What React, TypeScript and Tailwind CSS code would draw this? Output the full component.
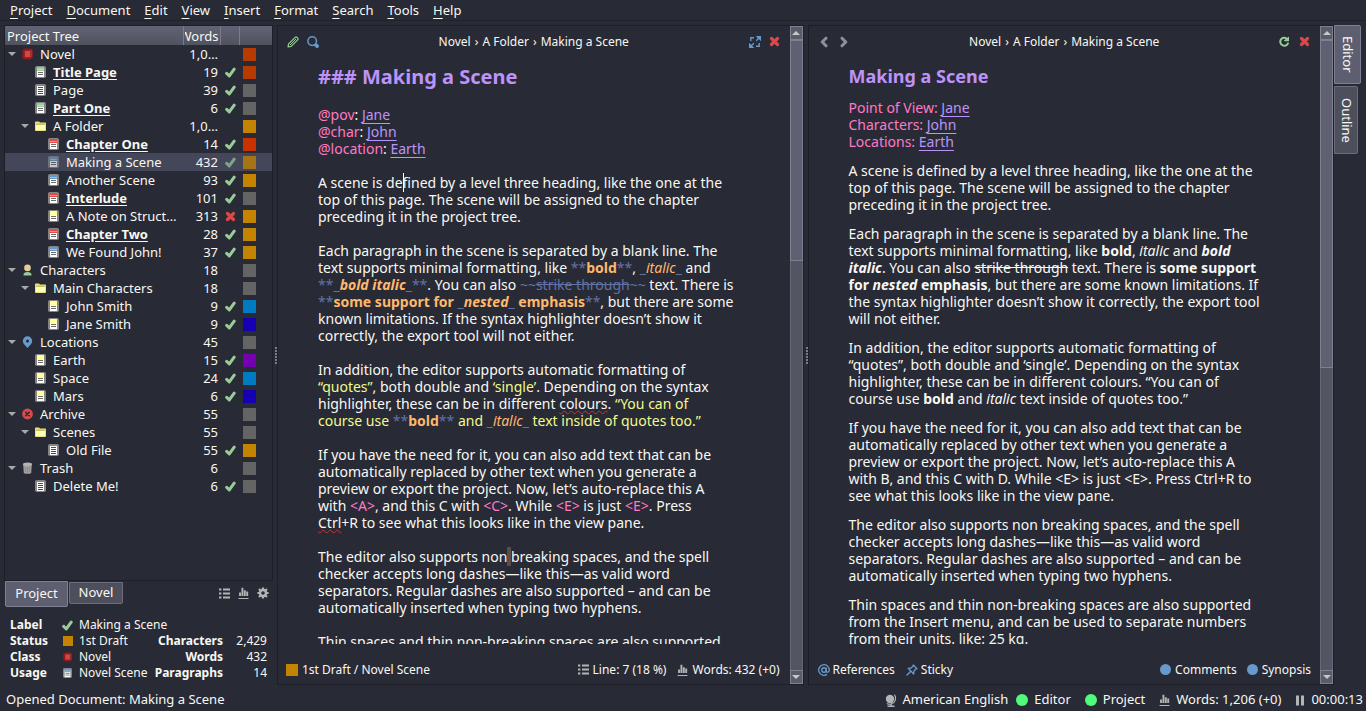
import React from "react";

const MENUS = ["Project", "Document", "Edit", "View", "Insert", "Format", "Search", "Tools", "Help"];

type IconName =
  | "novel" | "green" | "plain" | "red" | "blue" | "yellow"
  | "folder" | "person" | "pin" | "archive" | "trash";

type Row = {
  level: number;
  icon: IconName;
  name: string;
  words: string;
  mark?: "tick" | "cross";
  color: string;
  open?: boolean;
  bold?: boolean;
  selected?: boolean;
};

const GREY = "bg-[#646464]";
const AMBER = "bg-[#c48300]";

const ROWS: Row[] = [
  { level: 0, icon: "novel", name: "Novel", words: "1,0…", color: "bg-[#b53b00]", open: true },
  { level: 1, icon: "green", name: "Title Page", words: "19", mark: "tick", color: "bg-[#b53b00]", bold: true },
  { level: 1, icon: "plain", name: "Page", words: "39", mark: "tick", color: GREY },
  { level: 1, icon: "green", name: "Part One", words: "6", mark: "tick", color: GREY, bold: true },
  { level: 1, icon: "folder", name: "A Folder", words: "1,0…", color: AMBER, open: true },
  { level: 2, icon: "red", name: "Chapter One", words: "14", mark: "tick", color: "bg-[#c83200]", bold: true },
  { level: 2, icon: "blue", name: "Making a Scene", words: "432", mark: "tick", color: AMBER, selected: true },
  { level: 2, icon: "blue", name: "Another Scene", words: "93", mark: "tick", color: AMBER },
  { level: 2, icon: "red", name: "Interlude", words: "101", mark: "tick", color: GREY, bold: true },
  { level: 2, icon: "yellow", name: "A Note on Struct…", words: "313", mark: "cross", color: AMBER },
  { level: 2, icon: "red", name: "Chapter Two", words: "28", mark: "tick", color: AMBER, bold: true },
  { level: 2, icon: "blue", name: "We Found John!", words: "37", mark: "tick", color: AMBER },
  { level: 0, icon: "person", name: "Characters", words: "18", color: GREY, open: true },
  { level: 1, icon: "folder", name: "Main Characters", words: "18", color: GREY, open: true },
  { level: 2, icon: "yellow", name: "John Smith", words: "9", mark: "tick", color: "bg-[#007ac1]" },
  { level: 2, icon: "yellow", name: "Jane Smith", words: "9", mark: "tick", color: "bg-[#1500b4]" },
  { level: 0, icon: "pin", name: "Locations", words: "45", color: GREY, open: true },
  { level: 1, icon: "yellow", name: "Earth", words: "15", mark: "tick", color: "bg-[#7500b0]" },
  { level: 1, icon: "yellow", name: "Space", words: "24", mark: "tick", color: "bg-[#007ac1]" },
  { level: 1, icon: "yellow", name: "Mars", words: "6", mark: "tick", color: "bg-[#1500b4]" },
  { level: 0, icon: "archive", name: "Archive", words: "55", color: GREY, open: true },
  { level: 1, icon: "folder", name: "Scenes", words: "55", color: GREY, open: true },
  { level: 2, icon: "plain", name: "Old File", words: "55", mark: "tick", color: AMBER },
  { level: 0, icon: "trash", name: "Trash", words: "6", color: GREY, open: true },
  { level: 1, icon: "plain", name: "Delete Me!", words: "6", mark: "tick", color: GREY },
];

const INDENT = ["pl-0", "pl-[13px]", "pl-[26px]"];

function Tick({ className = "" }: { className?: string }) {
  return (
    <svg viewBox="0 0 11 11" className={`size-[11px] shrink-0 ${className}`} aria-hidden="true">
      <path d="M1.7 6.4 4.3 8.9 9.2 2.2" fill="none" stroke="#99cc99" strokeWidth="3" strokeLinecap="round" strokeLinejoin="round" />
    </svg>
  );
}

function Cross() {
  return (
    <svg viewBox="0 0 11 11" className="size-[11px] shrink-0" aria-hidden="true">
      <path d="M2.5 2.5 8.5 8.5M8.5 2.5 2.5 8.5" stroke="#dc4848" strokeWidth="3.2" strokeLinecap="round" />
    </svg>
  );
}

function DocIcon({ head, small }: { head?: string; small?: boolean }) {
  return (
    <svg viewBox="0 0 11 12" className={small ? "h-[10px] w-[9px] shrink-0" : "h-3 w-[11px] shrink-0"} aria-hidden="true">
      <rect width="11" height="12" rx="1.8" fill="#858585" />
      <rect x="2" y="2" width="7" height="9" fill="#fff" />
      {head ? (
        <>
          <rect x="2" y="1" width="7" height="4" fill={head} />
          <path d="M2 3.500h7" stroke="#fff" strokeWidth="1" opacity="0.4" />
          <path d="M3 6.500h5M3 8.500h5" stroke="#6b6b6b" strokeWidth="1" />
        </>
      ) : (
        <path d="M3 3.500h5M3 5.500h5M3 7.500h5M3 9.500h5" stroke="#4a4a4a" strokeWidth="1" />
      )}
    </svg>
  );
}

function NovelIcon({ small }: { small?: boolean }) {
  return (
    <svg viewBox="0 0 11 12" className={small ? "h-[10px] w-[9px] shrink-0" : "h-3 w-[11px] shrink-0"} aria-hidden="true">
      <path d="M2.2.6h7.2l1.3 1.2v7.8L8.8 11.5H1.6L.3 10.2V2.6z" fill="#8c1c1c" />
      <rect x="2.8" y="2.8" width="5.6" height="6.4" fill="#d24848" />
      <path d="M9.7 2v7.4" stroke="#c23a3a" strokeWidth="0.7" />
    </svg>
  );
}

function TreeIcon({ name }: { name: IconName }) {
  switch (name) {
    case "novel":
      return <NovelIcon />;
    case "green":
      return <DocIcon head="#99cc99" />;
    case "red":
      return <DocIcon head="#e24a4a" />;
    case "blue":
      return <DocIcon head="#6699cc" />;
    case "yellow":
      return <DocIcon head="#ffff99" />;
    case "plain":
      return <DocIcon />;
    case "folder":
      return (
        <svg viewBox="0 0 11 12" className="h-3 w-[11px] shrink-0" aria-hidden="true">
          <path d="M0 2.200Q0 1.400 .8 1.400H4l1 1.100h5.200q.8 0 .8.800v7q0 .8-.8.800H.8q-.8 0-.8-.8z" fill="#e8e07a" />
          <path d="M1 5h9v5H1z" fill="#ffffb4" />
          <path d="M1 4.200h9" stroke="#a9a352" strokeWidth="0.8" />
        </svg>
      );
    case "person":
      return (
        <svg viewBox="0 0 11 12" className="h-3 w-[11px] shrink-0" aria-hidden="true">
          <circle cx="5.5" cy="3.9" r="3.3" fill="#e6cd97" />
          <path d="M1.4 11.4c0-2.2 1.7-3.3 4.1-3.3s4.1 1.1 4.1 3.3z" fill="#99cc99" />
        </svg>
      );
    case "pin":
      return (
        <svg viewBox="0 0 11 12" className="h-3 w-[11px] shrink-0" aria-hidden="true">
          <path d="M5.5 12 2.1 8.3a4.7 4.7 0 1 1 6.8 0z" fill="#6699cc" />
          <circle cx="5.5" cy="5" r="1.5" fill="#282a36" />
        </svg>
      );
    case "archive":
      return (
        <svg viewBox="0 0 11 12" className="h-3 w-[11px] shrink-0" aria-hidden="true">
          <circle cx="5.5" cy="6" r="5.4" fill="#dc4848" />
          <path d="M3.8 4.3 7.2 7.7M7.2 4.3 3.8 7.7" stroke="#282a36" strokeWidth="1.5" strokeLinecap="round" />
        </svg>
      );
    case "trash":
      return (
        <svg viewBox="0 0 11 12" className="h-3 w-[11px] shrink-0" aria-hidden="true">
          <path d="M1.2 2.4h8.6L9.2 11q0 .8-3.7.8T1.8 11z" fill="#a0a0a0" />
          <ellipse cx="5.5" cy="2.3" rx="4.6" ry="1.7" fill="#b4b4b4" />
          <path d="M3.6 5v5M5.5 5.3v5M7.4 5v5" stroke="#858585" strokeWidth="0.7" />
        </svg>
      );
  }
}

function ListIcon() {
  return (
    <svg viewBox="0 0 11 11" className="size-[11px] shrink-0" aria-hidden="true">
      <path d="M0 1.5h2.4M0 5.5h2.4M0 9.5h2.4M4 1.5h7M4 5.5h7M4 9.5h7" stroke="#b4b4b4" strokeWidth="2" />
    </svg>
  );
}

function ChartIcon() {
  return (
    <svg viewBox="0 0 11 12" className="h-3 w-[11px] shrink-0" aria-hidden="true">
      <path d="M2 9V5.5M4.4 9V.8M6.8 9V3.2M9.2 9V4.5" stroke="#b4b4b4" strokeWidth="1.9" />
      <path d="M.5 11.5h10" stroke="#b4b4b4" strokeWidth="1" />
    </svg>
  );
}

function GearIcon() {
  return (
    <svg viewBox="0 0 12 12" className="size-3 shrink-0" aria-hidden="true">
      <circle cx="6" cy="6" r="3" fill="none" stroke="#b4b4b4" strokeWidth="2.4" />
      <path d="M6 .4v2M6 9.6v2M.4 6h2M9.6 6h2M2 2l1.5 1.5M8.5 8.5 10 10M10 2 8.5 3.5M3.5 8.5 2 10" stroke="#b4b4b4" strokeWidth="2.2" />
    </svg>
  );
}

function PencilIcon() {
  return (
    <svg viewBox="0 0 12 12" className="size-3 shrink-0" aria-hidden="true">
      <path d="M1 11 1.6 7.9 8.2 1.3q.8-.8 1.7 0l.8.8q.8.9 0 1.7L4.1 10.4z" fill="none" stroke="#99cc99" strokeWidth="1.2" strokeLinejoin="round" />
      <path d="M3 9 9 3" stroke="#99cc99" strokeWidth="1" />
    </svg>
  );
}

function SearchIcon() {
  return (
    <svg viewBox="0 0 12 12" className="size-3 shrink-0" aria-hidden="true">
      <circle cx="5.2" cy="5.1" r="4.3" fill="none" stroke="#6699cc" strokeWidth="1.5" />
      <path d="M9 9.2 10.1 10.2" stroke="#6699cc" strokeWidth="3.6" strokeLinecap="round" />
    </svg>
  );
}

function ExpandIcon() {
  return (
    <svg viewBox="0 0 12 12" className="size-3 shrink-0" aria-hidden="true">
      <path d="M6.7 0H12v5.2z" fill="#6699cc" />
      <path d="M0 6.8V12h5.3z" fill="#6699cc" />
      <path d="M10 2 7.2 4.8M2 10l2.8-2.8M5 1.8H1.8V5M10.2 7v3.2H7" fill="none" stroke="#6699cc" strokeWidth="1.4" />
    </svg>
  );
}

function RefreshIcon() {
  return (
    <svg viewBox="0 0 11 11" className="size-[11px] shrink-0" aria-hidden="true">
      <path d="M8.2 3A4 4 0 1 0 9.2 6.6" fill="none" stroke="#99cc99" strokeWidth="2" />
      <path d="M5.2 5.3V4.3L10 .4V5.3z" fill="#99cc99" />
    </svg>
  );
}

function Chevron({ right }: { right?: boolean }) {
  return (
    <svg viewBox="0 0 8 12" className="h-3 w-2 shrink-0" aria-hidden="true">
      <path d={right ? "M2 2.2 5.8 6 2 9.8" : "M6 2.2 2.2 6 6 9.8"} fill="none" stroke="#8f9199" strokeWidth="3" strokeLinecap="round" strokeLinejoin="round" />
    </svg>
  );
}

function AtIcon() {
  return (
    <svg viewBox="0 0 12 12" className="size-3 shrink-0" aria-hidden="true">
      <circle cx="6" cy="6" r="2.2" fill="none" stroke="#6699cc" strokeWidth="1.4" />
      <path d="M8.2 3.8v3.1c0 2 3.1 1.8 3.1-.9A5.3 5.3 0 1 0 9 10.4" fill="none" stroke="#6699cc" strokeWidth="1.3" />
    </svg>
  );
}

function StickyIcon() {
  return (
    <svg viewBox="0 0 12 12" className="size-3 shrink-0" aria-hidden="true">
      <path d="M7.3 1 11 4.7 9.7 5.2 8 7l-.3 3L2.2 4.4 5.2 4 6.9 2.3z" fill="none" stroke="#6699cc" strokeWidth="1.3" strokeLinejoin="round" />
      <path d="M4.8 7.2 1 11" stroke="#6699cc" strokeWidth="1.4" strokeLinecap="round" />
    </svg>
  );
}

function GlobeIcon() {
  return (
    <svg viewBox="0 0 12 13" className="h-[13px] w-3 shrink-0" aria-hidden="true">
      <circle cx="5" cy="5" r="4.2" fill="#b4b4b4" />
      <path d="M9.4 .6C12 4 10.400 8.800 6.400 9.900 4.800 10.400 3.200 10.200 1.800 9.400" fill="none" stroke="#b4b4b4" strokeWidth="1.1" />
      <path d="M6 9.8v2.200M2.500 12.200h7" stroke="#b4b4b4" strokeWidth="1.4" />
    </svg>
  );
}

function Dot({ className }: { className: string }) {
  return <span className={`shrink-0 rounded-full ${className}`} />;
}

function ProjectTree() {
  const th = "h-[19px] border-r border-[#7a7c8b] p-0 font-normal";
  return (
    <div className="min-h-0 flex-1 overflow-hidden border border-[#1d1e27]">
      <table className="w-full table-fixed border-collapse text-[13px] leading-[18px]">
        <colgroup>
          <col />
          <col className="w-[37px]" />
          <col className="w-[19px]" />
          <col className="w-[33px]" />
        </colgroup>
        <thead className="bg-linear-to-b from-[#626475] to-[#505260]">
          <tr>
            <th className={`${th} pl-[2px] text-left`}>Project Tree</th>
            <th className={`${th} px-px`}>
              <span className="flex justify-end overflow-hidden">Words</span>
            </th>
            <th className={th} aria-label="Active" />
            <th className="p-0" aria-label="Status" />
          </tr>
        </thead>
        <tbody>
          {ROWS.map((r) => (
            <tr key={r.name} className={r.selected ? "bg-[#44475a]" : ""}>
              <td className="h-[18px] overflow-hidden p-0">
                <div className={`flex items-center ${INDENT[r.level]}`}>
                  <span className="flex w-[17px] justify-center pr-1">
                    {r.open && (
                      <svg viewBox="0 0 8 4" className="h-1 w-2" aria-hidden="true">
                        <path d="M0 0h8L4 4z" fill="#a8a8a8" />
                      </svg>
                    )}
                  </span>
                  <span className={r.selected ? "opacity-70" : ""}>
                    <TreeIcon name={r.icon} />
                  </span>
                  <span className={`ml-[7px] whitespace-nowrap ${r.bold ? "font-bold underline underline-offset-2" : ""}`}>{r.name}</span>
                </div>
              </td>
              <td className="p-0 pr-[2px] text-right">{r.words}</td>
              <td className="p-0 pl-[2px]">
                <span className={`flex justify-center ${r.selected ? "opacity-70" : ""}`}>
                  {r.mark === "tick" && <Tick />}
                  {r.mark === "cross" && <Cross />}
                </span>
              </td>
              <td className="p-0 pl-1">
                <span className={`block size-[13px] ${r.color} ${r.selected ? "opacity-75" : ""}`} />
              </td>
            </tr>
          ))}
        </tbody>
      </table>
    </div>
  );
}

function Details() {
  return (
    <div className="grid grid-cols-[52px_17px_1fr_auto_44px] items-center px-[6px] pt-[10px] pb-1 text-xs leading-4 whitespace-nowrap">
      <b>Label</b>
      <Tick />
      <span className="col-span-3">Making a Scene</span>
      <b>Status</b>
      <span className={`ml-px size-[10px] ${AMBER}`} />
      <span>1st Draft</span>
      <b className="text-right">Characters</b>
      <span className="text-right">2,429</span>
      <b>Class</b>
      <span className="ml-px"><NovelIcon small /></span>
      <span>Novel</span>
      <b className="text-right">Words</b>
      <span className="text-right">432</span>
      <b>Usage</b>
      <span className="ml-px"><DocIcon head="#6699cc" small /></span>
      <span>Novel Scene</span>
      <b className="text-right">Paragraphs</b>
      <span className="text-right">14</span>
    </div>
  );
}

function Splitter() {
  return (
    <div className="flex w-1 shrink-0 flex-col items-end justify-center gap-px">
      {[0, 1, 2, 3, 4, 5].map((n) => (
        <span key={n} className="size-[2px] bg-[#7b7d86]" />
      ))}
    </div>
  );
}

function ScrollBar({ thumb }: { thumb: string }) {
  const btn = "flex h-[14px] shrink-0 items-center justify-center border border-[#7f8190] bg-[#5a5c6c]";
  return (
    <div className="flex w-[13px] shrink-0 flex-col bg-[#535563]">
      <button type="button" aria-label="Scroll up" className={btn}>
        <svg viewBox="0 0 8 4" className="h-1 w-2" aria-hidden="true"><path d="M0 4h8L4 0z" fill="#c8c8c8" /></svg>
      </button>
      <div className="min-h-0 flex-1 border-x border-[#666877]">
        <div className={`-mx-px border border-[#7f8190] bg-[#5f6172] ${thumb}`} />
      </div>
      <button type="button" aria-label="Scroll down" className={btn}>
        <svg viewBox="0 0 8 4" className="h-1 w-2" aria-hidden="true"><path d="M0 0h8L4 4z" fill="#c8c8c8" /></svg>
      </button>
    </div>
  );
}

function M({ children }: { children: React.ReactNode }) {
  return <span className="text-[#6272a4]">{children}</span>;
}
function O({ children }: { children: React.ReactNode }) {
  return <span className="text-[#ffb86c]">{children}</span>;
}
function Y({ children }: { children: React.ReactNode }) {
  return <span className="text-[#f1fa8c]">{children}</span>;
}
function P({ children }: { children: React.ReactNode }) {
  return <span className="text-[#ff79c6]">{children}</span>;
}
function Tag({ children }: { children: React.ReactNode }) {
  return <a href="#tag" className="text-[#bd93f9] underline underline-offset-3">{children}</a>;
}
function Misspelt({ children }: { children: React.ReactNode }) {
  return <span className="underline decoration-[#d03030] decoration-wavy decoration-1">{children}</span>;
}

function Breadcrumb() {
  return (
    <span className="flex flex-1 justify-center gap-1 whitespace-nowrap">
      <span>Novel</span>
      <span>›</span>
      <span>A Folder</span>
      <span>›</span>
      <span>Making a Scene</span>
    </span>
  );
}

const iconBtn = "flex items-center justify-center";

function Editor() {
  return (
    <section className="flex min-w-0 flex-1 border border-[#1d1e27]" aria-label="Editor">
      <div className="flex min-w-0 flex-1 flex-col">
        <header className="flex h-[31px] shrink-0 items-center px-[9px] text-xs">
          <div className="flex w-16 gap-2">
            <button type="button" aria-label="Edit" className={iconBtn}><PencilIcon /></button>
            <button type="button" aria-label="Find" className={iconBtn}><SearchIcon /></button>
          </div>
          <Breadcrumb />
          <div className="flex w-16 justify-end gap-2 pr-px">
            <button type="button" aria-label="Focus mode" className={iconBtn}><ExpandIcon /></button>
            <button type="button" aria-label="Close editor" className={iconBtn}><Cross /></button>
          </div>
        </header>
        <div className="flex min-h-0 flex-1 flex-col gap-[17px] overflow-hidden pt-2 pl-10 text-sm leading-[17px] whitespace-nowrap">
          <h1 className="text-xl leading-6 font-bold text-[#bd93f9]">### Making a Scene</h1>
          <p>
            <P>@pov</P>: <Tag>Jane</Tag><br />
            <P>@char</P>: <Tag>John</Tag><br />
            <P>@location</P>: <Tag>Earth</Tag>
          </p>
          <p>
            A scene is de<span className="-mr-px border-l border-white" />fined by a level three heading, like the one at the<br />
            top of this page. The scene will be assigned to the chapter<br />
            preceding it in the project tree.
          </p>
          <p>
            Each paragraph in the scene is separated by a blank line. The<br />
            text supports minimal formatting, like <M>**</M><O><b>bold</b></O><M>**</M>, <M>_</M><O><i>italic</i></O><M>_</M> and<br />
            <M>**_</M><O><b><i>bold italic</i></b></O><M>_**</M>. You can also <M>~~<s>strike through</s>~~</M> text. There is<br />
            <M>**</M><O><b>some support for </b></O><M>_</M><O><b><i>nested</i></b></O><M>_</M><O><b> emphasis</b></O><M>**</M>, but there are some<br />
            known limitations. If the syntax highlighter doesn’t show it<br />
            correctly, the export tool will not either.
          </p>
          <p>
            In addition, the editor supports automatic formatting of<br />
            <Y>“quotes”</Y>, both double and <Y>‘single’</Y>. Depending on the syntax<br />
            highlighter, these can be in different <Misspelt>colours</Misspelt>. <Y>“You can of</Y><br />
            <Y>course use </Y><M>**</M><O><b>bold</b></O><M>**</M><Y> and </Y><M>_</M><O><i>italic</i></O><M>_</M><Y> text inside of quotes too.”</Y>
          </p>
          <p>
            If you have the need for it, you can also add text that can be<br />
            automatically replaced by other text when you generate a<br />
            preview or export the project. Now, let’s auto-replace this A<br />
            with <P>&lt;A&gt;</P>, and this C with <P>&lt;C&gt;</P>. While <P>&lt;E&gt;</P> is just <P>&lt;E&gt;</P>. Press<br />
            <Misspelt>Ctrl</Misspelt>+R to see what this looks like in the view pane.
          </p>
          <p>
            The editor also supports non<span className="bg-[#5d4b48]">&nbsp;</span>breaking spaces, and the spell<br />
            checker accepts long dashes—like this—as valid word<br />
            separators. Regular dashes are also supported – and can be<br />
            automatically inserted when typing two hyphens.
          </p>
          <p>Thin spaces and thin non-breaking spaces are also supported</p>
        </div>
        <footer className="flex h-10 shrink-0 items-center justify-between px-2 pt-[11px] pr-[10px] text-xs whitespace-nowrap">
          <span className="flex items-center gap-1"><span className={`size-3 ${AMBER}`} />1st Draft / Novel Scene</span>
          <span className="flex items-center gap-[11px]">
            <span className="flex items-center gap-1"><ListIcon />Line: 7 (18 %)</span>
            <span className="flex items-center gap-1"><ChartIcon />Words: 432 (+0)</span>
          </span>
        </footer>
      </div>
      <ScrollBar thumb="h-[35%]" />
    </section>
  );
}

function Viewer() {
  return (
    <section className="flex min-w-0 flex-1 border border-[#1d1e27]" aria-label="Viewer">
      <div className="flex min-w-0 flex-1 flex-col">
        <header className="flex h-[31px] shrink-0 items-center px-[10px] text-xs">
          <div className="flex w-16 gap-3 pl-px">
            <button type="button" aria-label="Back" className={iconBtn}><Chevron /></button>
            <button type="button" aria-label="Forward" className={iconBtn}><Chevron right /></button>
          </div>
          <Breadcrumb />
          <div className="flex w-16 justify-end gap-[9px]">
            <button type="button" aria-label="Reload" className={iconBtn}><RefreshIcon /></button>
            <button type="button" aria-label="Close viewer" className={iconBtn}><Cross /></button>
          </div>
        </header>
        <div className="flex min-h-0 flex-1 flex-col gap-3 overflow-hidden pt-2 pl-10 text-sm leading-[17px] whitespace-nowrap">
          <h1 className="text-lg leading-[22px] font-bold text-[#bd93f9]">Making a Scene</h1>
          <p>
            <P>Point of View:</P> <Tag>Jane</Tag><br />
            <P>Characters:</P> <Tag>John</Tag><br />
            <P>Locations:</P> <Tag>Earth</Tag>
          </p>
          <p>
            A scene is defined by a level three heading, like the one at the<br />
            top of this page. The scene will be assigned to the chapter<br />
            preceding it in the project tree.
          </p>
          <p>
            Each paragraph in the scene is separated by a blank line. The<br />
            text supports minimal formatting, like <b>bold</b>, <i>italic</i> and <b><i>bold</i></b><br />
            <b><i>italic</i></b>. You can also <s>strike through</s> text. There is <b>some support</b><br />
            <b>for <i>nested</i> emphasis</b>, but there are some known limitations. If<br />
            the syntax highlighter doesn’t show it correctly, the export tool<br />
            will not either.
          </p>
          <p>
            In addition, the editor supports automatic formatting of<br />
            “quotes”, both double and ‘single’. Depending on the syntax<br />
            highlighter, these can be in different colours. “You can of<br />
            course use <b>bold</b> and <i>italic</i> text inside of quotes too.”
          </p>
          <p>
            If you have the need for it, you can also add text that can be<br />
            automatically replaced by other text when you generate a<br />
            preview or export the project. Now, let’s auto-replace this A<br />
            with B, and this C with D. While &lt;E&gt; is just &lt;E&gt;. Press Ctrl+R to<br />
            see what this looks like in the view pane.
          </p>
          <p>
            The editor also supports non breaking spaces, and the spell<br />
            checker accepts long dashes—like this—as valid word<br />
            separators. Regular dashes are also supported – and can be<br />
            automatically inserted when typing two hyphens.
          </p>
          <p>
            Thin spaces and thin non-breaking spaces are also supported<br />
            from the Insert menu, and can be used to separate numbers<br />
            from their units. like: 25 kg.
          </p>
        </div>
        <footer className="flex h-10 shrink-0 items-center justify-between px-[9px] pt-[11px] text-xs whitespace-nowrap">
          <span className="flex items-center gap-[11px]">
            <button type="button" className="flex items-center gap-[3px]"><AtIcon />References</button>
            <button type="button" className="flex items-center gap-[3px]"><StickyIcon />Sticky</button>
          </span>
          <span className="flex items-center gap-[10px]">
            <button type="button" className="flex items-center gap-1"><Dot className="size-[11px] bg-[#6699cc]" />Comments</button>
            <button type="button" className="flex items-center gap-1"><Dot className="size-[11px] bg-[#6699cc]" />Synopsis</button>
          </span>
        </footer>
      </div>
      <ScrollBar thumb="h-[52%]" />
    </section>
  );
}

export default function App() {
  return (
    <div className="flex h-screen flex-col overflow-hidden bg-[#282a36] font-['Noto_Sans',sans-serif] text-[#f8f8f2]">
      <nav className="flex h-[21px] shrink-0 items-center gap-[14px] border-b border-[#20222c] px-[10px] pt-px text-[13px]">
        {MENUS.map((m) => (
          <button key={m} type="button">
            <span className="underline underline-offset-3">{m[0]}</span>{m.slice(1)}
          </button>
        ))}
      </nav>
      <main className="flex min-h-0 flex-1 pt-1 pl-1">
        <aside className="flex w-[269px] shrink-0 flex-col">
          <ProjectTree />
          <div className="flex items-start justify-between pl-px">
            <div className="flex items-start gap-px text-[13px]">
              <button type="button" className="h-[26px] w-[63px] rounded-b-xs border border-[#7f8190] bg-[#5d5f70]">Project</button>
              <button type="button" className="mt-px h-[22px] w-[54px] rounded-b-xs border border-[#6b6d7c] bg-[#4d4f5d]">Novel</button>
            </div>
            <div className="flex gap-2 pt-[6px] pr-1">
              <button type="button" aria-label="Details" className={iconBtn}><ListIcon /></button>
              <button type="button" aria-label="Statistics" className={iconBtn}><ChartIcon /></button>
              <button type="button" aria-label="Settings" className={iconBtn}><GearIcon /></button>
            </div>
          </div>
          <Details />
        </aside>
        <Splitter />
        <Editor />
        <Splitter />
        <Viewer />
        <div className="flex w-8 shrink-0 flex-col items-start gap-[2px] text-[13px]">
          <button type="button" className="flex h-[59px] w-[27px] items-center justify-center rounded-r-xs border border-[#7f8190] bg-[#5d5f70] [writing-mode:vertical-rl]">Editor</button>
          <button type="button" className="flex h-[68px] w-6 items-center justify-center rounded-r-xs border border-[#6b6d7c] bg-[#4d4f5d] [writing-mode:vertical-rl]">Outline</button>
        </div>
      </main>
      <footer className="flex h-[26px] shrink-0 items-center justify-between pt-1 pr-[3px] pl-[6px] text-[13px] whitespace-nowrap">
        <span>Opened Document: Making a Scene</span>
        <span className="flex items-center gap-[14px]">
          <span className="flex items-center gap-2">
            <span className="flex items-center gap-[6px]"><GlobeIcon />American English</span>
            <span className="flex items-center gap-[6px]"><Dot className="size-3 bg-[#50fa7b]" />Editor</span>
          </span>
          <span className="flex items-center gap-[6px]"><Dot className="size-3 bg-[#50fa7b]" />Project</span>
          <span className="flex items-center gap-[6px]"><ChartIcon />Words: 1,206 (+0)</span>
          <span className="flex items-center gap-[6px]">
            <svg viewBox="0 0 10 11" className="h-[11px] w-[10px]" aria-hidden="true"><path d="M2.5 .5v10M7.5 .5v10" stroke="#b4b4b4" strokeWidth="3" /></svg>
            00:00:13
          </span>
        </span>
      </footer>
    </div>
  );
}
